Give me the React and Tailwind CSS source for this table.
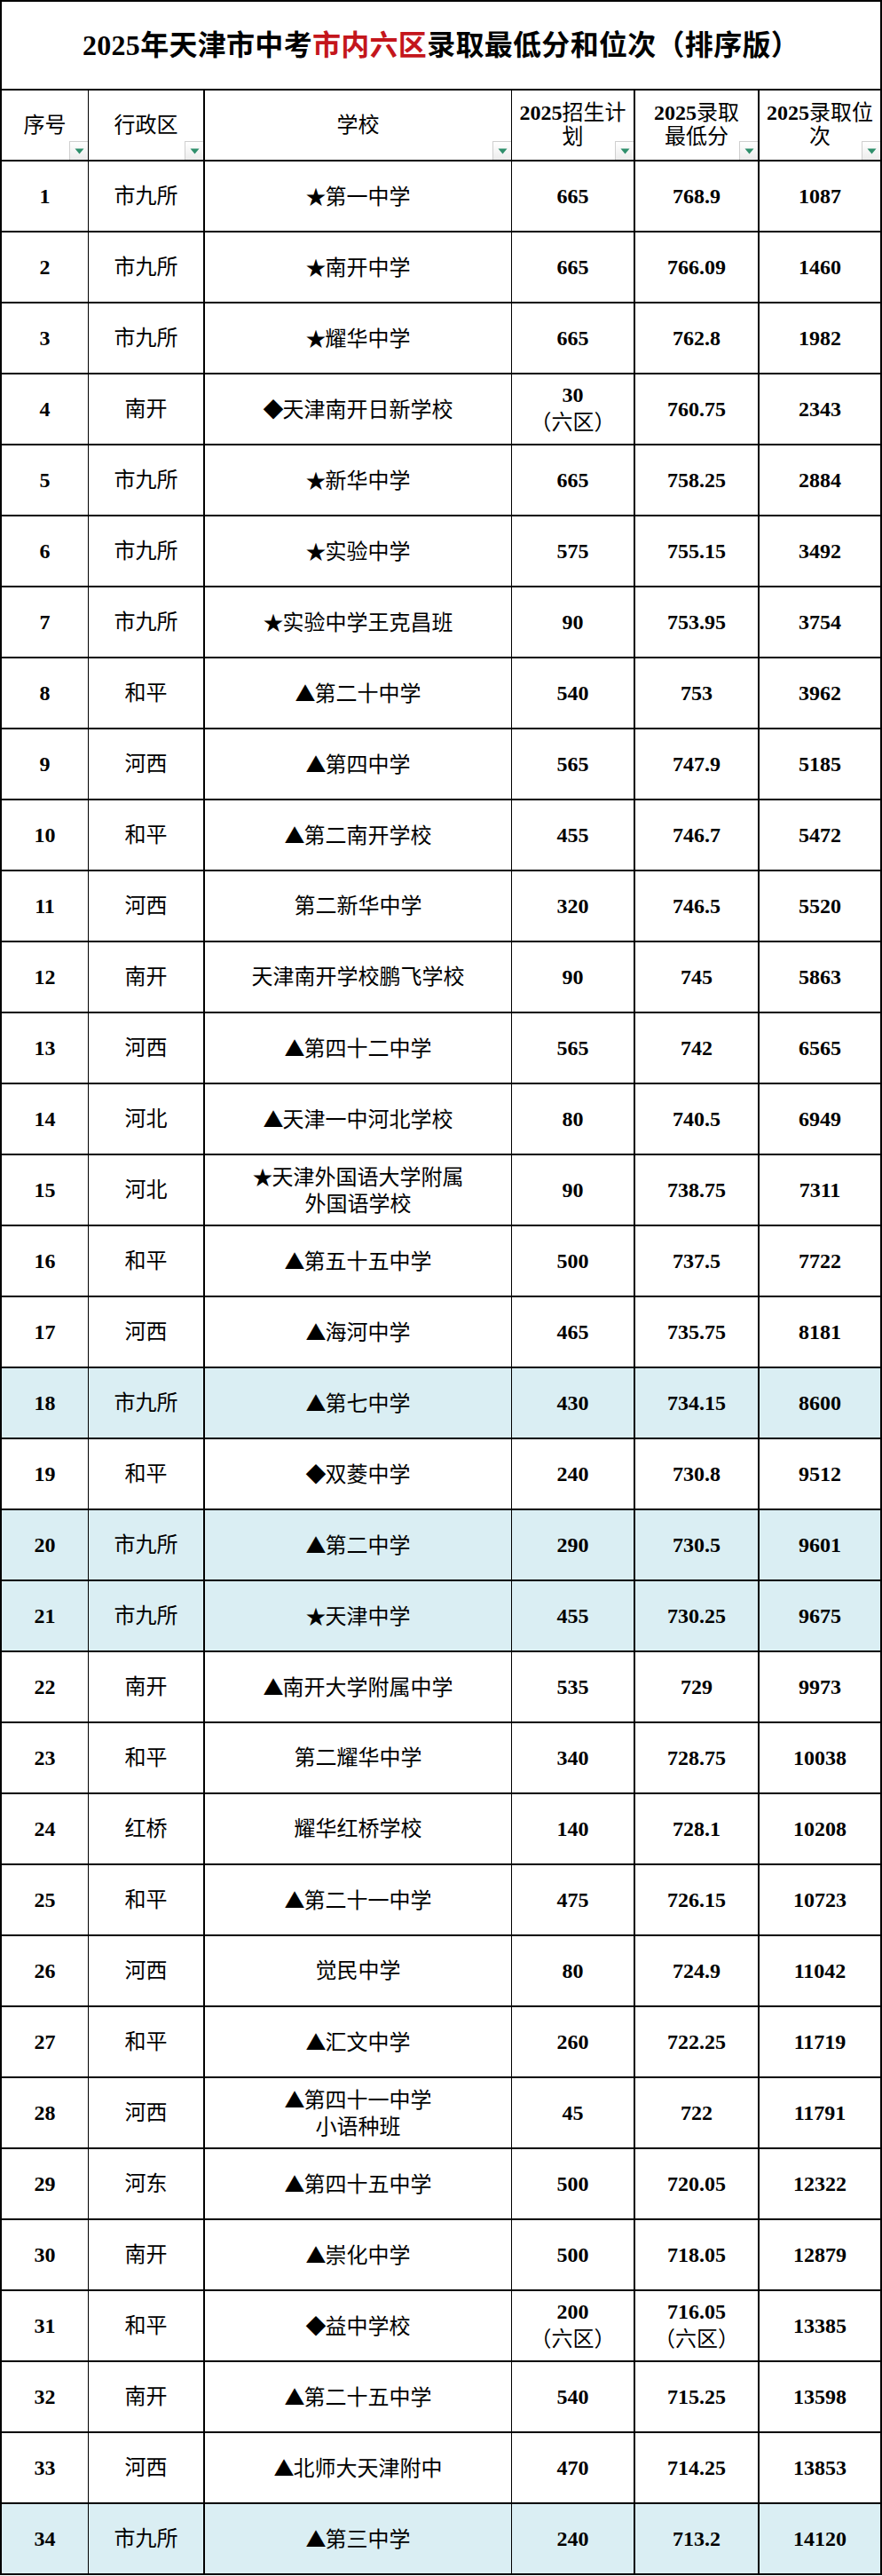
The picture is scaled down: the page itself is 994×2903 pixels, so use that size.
import React from "react";

const rows = [
  [1, "市九所", "★第一中学", "665", "768.9", "1087"],
  [2, "市九所", "★南开中学", "665", "766.09", "1460"],
  [3, "市九所", "★耀华中学", "665", "762.8", "1982"],
  [4, "南开", "◆天津南开日新学校", ["30", "（六区）"], "760.75", "2343"],
  [5, "市九所", "★新华中学", "665", "758.25", "2884"],
  [6, "市九所", "★实验中学", "575", "755.15", "3492"],
  [7, "市九所", "★实验中学王克昌班", "90", "753.95", "3754"],
  [8, "和平", "▲第二十中学", "540", "753", "3962"],
  [9, "河西", "▲第四中学", "565", "747.9", "5185"],
  [10, "和平", "▲第二南开学校", "455", "746.7", "5472"],
  [11, "河西", "第二新华中学", "320", "746.5", "5520"],
  [12, "南开", "天津南开学校鹏飞学校", "90", "745", "5863"],
  [13, "河西", "▲第四十二中学", "565", "742", "6565"],
  [14, "河北", "▲天津一中河北学校", "80", "740.5", "6949"],
  [15, "河北", ["★天津外国语大学附属", "外国语学校"], "90", "738.75", "7311"],
  [16, "和平", "▲第五十五中学", "500", "737.5", "7722"],
  [17, "河西", "▲海河中学", "465", "735.75", "8181"],
  [18, "市九所", "▲第七中学", "430", "734.15", "8600", true],
  [19, "和平", "◆双菱中学", "240", "730.8", "9512"],
  [20, "市九所", "▲第二中学", "290", "730.5", "9601", true],
  [21, "市九所", "★天津中学", "455", "730.25", "9675", true],
  [22, "南开", "▲南开大学附属中学", "535", "729", "9973"],
  [23, "和平", "第二耀华中学", "340", "728.75", "10038"],
  [24, "红桥", "耀华红桥学校", "140", "728.1", "10208"],
  [25, "和平", "▲第二十一中学", "475", "726.15", "10723"],
  [26, "河西", "觉民中学", "80", "724.9", "11042"],
  [27, "和平", "▲汇文中学", "260", "722.25", "11719"],
  [28, "河西", ["▲第四十一中学", "小语种班"], "45", "722", "11791"],
  [29, "河东", "▲第四十五中学", "500", "720.05", "12322"],
  [30, "南开", "▲崇化中学", "500", "718.05", "12879"],
  [31, "和平", "◆益中学校", ["200", "（六区）"], ["716.05", "（六区）"], "13385"],
  [32, "南开", "▲第二十五中学", "540", "715.25", "13598"],
  [33, "河西", "▲北师大天津附中", "470", "714.25", "13853"],
  [34, "市九所", "▲第三中学", "240", "713.2", "14120", true],
];

const colBorders = [
  "border-r border-b-2",
  "border-r-2 border-b-2",
  "border-r border-b-2",
  "border-r-2 border-b-2",
  "border-r-2 border-b-2",
  "border-r-2 border-b-2",
];

function Filter() {
  return (
    <div className="absolute right-0 bottom-0 w-[21px] h-[21px] border-l border-t border-[#cfcfcf] bg-gradient-to-b from-white to-[#ececec] flex items-center justify-center">
      <svg width="11" height="7" viewBox="0 0 11 7">
        <path d="M0.5 0.5 L10.5 0.5 L5.5 6.5 Z" fill="#2f8f6c" />
      </svg>
    </div>
  );
}

function Num({ v }) {
  if (Array.isArray(v)) {
    return (
      <div className="flex flex-col items-center leading-[31px]">
        <span className="font-bold">{v[0]}</span>
        <span className="font-normal">{v[1]}</span>
      </div>
    );
  }
  return <span className="font-bold">{v}</span>;
}

const SYMS = "★▲◆";

function Line({ t }) {
  if (SYMS.includes(t[0])) {
    return (
      <span>
        <span
          className="inline-block text-[23px] -mr-[1px]"
          style={{ fontFamily: '"Noto Sans CJK SC", sans-serif' }}
        >
          {t[0]}
        </span>
        {t.slice(1)}
      </span>
    );
  }
  return <span>{t}</span>;
}

function School({ v }) {
  if (Array.isArray(v)) {
    return (
      <div className="flex flex-col items-center leading-[30px]">
        <Line t={v[0]} />
        <Line t={v[1]} />
      </div>
    );
  }
  return <Line t={v} />;
}

export default function App() {
  const font = {
    fontFamily: '"Liberation Serif", "Noto Sans CJK SC", serif',
  };
  const headers = [
    <span>序号</span>,
    <span>行政区</span>,
    <span>学校</span>,
    <span>
      <b>2025</b>招生计
      <br />划
    </span>,
    <span>
      <b>2025</b>录取
      <br />
      最低分
    </span>,
    <span>
      <b>2025</b>录取位
      <br />次
    </span>,
  ];
  return (
    <div className="bg-white w-[994px]" style={font}>
      <div className="w-[994px] border-l-2 border-t-2 border-black grid grid-cols-[98px_131px_346px_139px_140px_138px] text-black">
        <div className="col-span-6 h-[100px] border-r-2 border-b-2 border-black flex items-center justify-center text-[32px] font-bold tracking-[0.3px]">
          <span>
            2025年天津市中考<span className="text-[#c4161c]">市内六区</span>录取最低分和位次（排序版）
          </span>
        </div>
        {headers.map((h, i) => (
          <div
            key={"h" + i}
            className={`relative h-[80px] ${colBorders[i]} border-black flex items-center justify-center text-center text-[24px] leading-[27px]`}
          >
            {h}
            <Filter />
          </div>
        ))}
        {rows.map((r) => {
          const hl = r[6] ? "bg-[#daeef3]" : "bg-white";
          const cells = [
            <span className="font-bold">{r[0]}</span>,
            <span>{r[1]}</span>,
            <School v={r[2]} />,
            <Num v={r[3]} />,
            <Num v={r[4]} />,
            <Num v={r[5]} />,
          ];
          return cells.map((c, i) => (
            <div
              key={r[0] + "-" + i}
              className={`h-[80px] ${colBorders[i]} border-black ${hl} flex items-center justify-center text-center text-[24px]`}
            >
              {c}
            </div>
          ));
        })}
      </div>
    </div>
  );
}
